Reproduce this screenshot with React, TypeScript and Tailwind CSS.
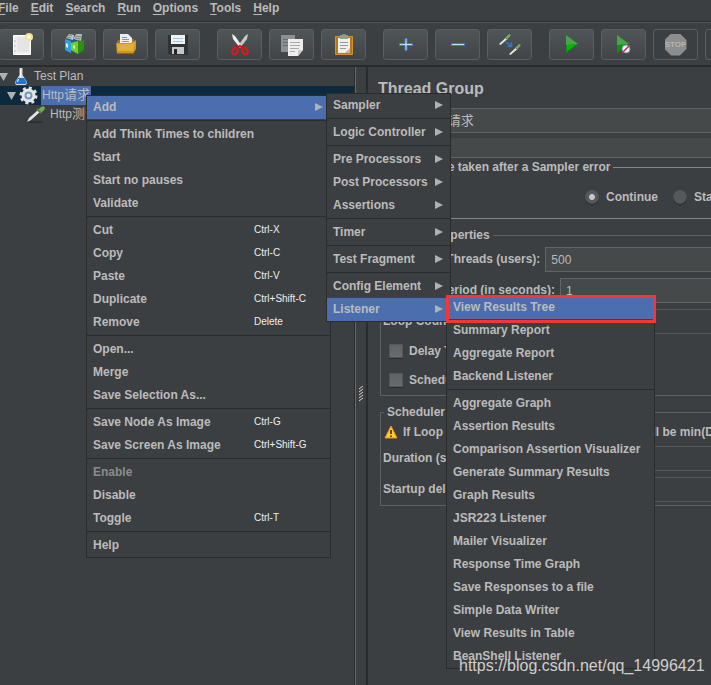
import React from "react";

type Item = { label: string; keys?: string; arrow?: boolean; active?: boolean; disabled?: boolean };
type Group = Item[];

const contextMenu: Group[] = [
  [{ label: "Add", arrow: true, active: true }],
  [
    { label: "Add Think Times to children" },
    { label: "Start" },
    { label: "Start no pauses" },
    { label: "Validate" },
  ],
  [
    { label: "Cut", keys: "Ctrl-X" },
    { label: "Copy", keys: "Ctrl-C" },
    { label: "Paste", keys: "Ctrl-V" },
    { label: "Duplicate", keys: "Ctrl+Shift-C" },
    { label: "Remove", keys: "Delete" },
  ],
  [{ label: "Open..." }, { label: "Merge" }, { label: "Save Selection As..." }],
  [
    { label: "Save Node As Image", keys: "Ctrl-G" },
    { label: "Save Screen As Image", keys: "Ctrl+Shift-G" },
  ],
  [{ label: "Enable", disabled: true }, { label: "Disable" }, { label: "Toggle", keys: "Ctrl-T" }],
  [{ label: "Help" }],
];

const addMenu: Group[] = [
  [{ label: "Sampler", arrow: true }],
  [{ label: "Logic Controller", arrow: true }],
  [
    { label: "Pre Processors", arrow: true },
    { label: "Post Processors", arrow: true },
    { label: "Assertions", arrow: true },
  ],
  [{ label: "Timer", arrow: true }],
  [{ label: "Test Fragment", arrow: true }],
  [
    { label: "Config Element", arrow: true },
    { label: "Listener", arrow: true, active: true },
  ],
];

const listenerMenu: Group[] = [
  [
    { label: "View Results Tree", active: true },
    { label: "Summary Report" },
    { label: "Aggregate Report" },
    { label: "Backend Listener" },
  ],
  [
    { label: "Aggregate Graph" },
    { label: "Assertion Results" },
    { label: "Comparison Assertion Visualizer" },
    { label: "Generate Summary Results" },
    { label: "Graph Results" },
    { label: "JSR223 Listener" },
    { label: "Mailer Visualizer" },
    { label: "Response Time Graph" },
    { label: "Save Responses to a file" },
    { label: "Simple Data Writer" },
    { label: "View Results in Table" },
    { label: "BeanShell Listener" },
  ],
];

function Menu({ groups, className }: { groups: Group[]; className: string }) {
  return (
    <div role="menu" className={"absolute border border-[#2b2b2b] bg-[#3c3f41] " + className}>
      {groups.map((group, i) => (
        <div key={i} className={i > 0 ? "mt-px border-t border-[#2b2b2b] pt-0.5" : ""}>
          {group.map((item) => (
            <button
              key={item.label}
              type="button"
              role="menuitem"
              disabled={item.disabled}
              className={
                "flex h-[23px] w-full items-center whitespace-nowrap pb-0.5 pl-1.5 text-left font-bold " +
                (item.active ? "bg-[#4b6eaf]" : "") +
                (item.disabled ? " text-[#8c8c8c]" : "")
              }
            >
              <span className="flex-1">{item.label}</span>
              {item.keys && <span className="w-[76px] text-[10px] font-normal text-[#eeeeee]">{item.keys}</span>}
              {item.arrow && (
                <svg className="mr-[7px] h-2 w-2 shrink-0" viewBox="0 0 8 8" aria-hidden="true">
                  <path d="M0 0 L8 4 L0 8 Z" fill="#afb1b3" />
                </svg>
              )}
            </button>
          ))}
        </div>
      ))}
    </div>
  );
}

function Pipette({ x = 0, y = 0 }: { x?: number; y?: number }) {
  return (
    <g transform={`translate(${x} ${y})`}>
      <path d="M0 10 L7 3.500 L8.500 5 L1.500 11 Z" fill="#e4e6e2" />
      <path d="M6 4 L10 0 Q12 0 11.500 2 L8 5.500 Z" fill="#7aa862" />
      <path d="M6 3 L9 6" stroke="#4c8a35" />
    </g>
  );
}

const icons: Record<string, React.ReactNode> = {
  New: (
    <>
      <path d="M3.500 5.500 H20.500 V24.500 H3.500 Z" fill="#f0f0f0" stroke="#fff" />
      <path d="M4.500 11h1m-1 5h1m-1 5h1" stroke="#888" />
      <path d="M7 7 H19 V22 H7 Z" fill="#e5e5e5" />
      <circle cx="19" cy="7" r="4" fill="#eee38a" />
      <circle cx="19" cy="7" r="2" fill="#fffbd2" />
    </>
  ),
  Templates: (
    <>
      <path d="M4 8 L7 4 L12 5 L11 10 Z" fill="#c3c9cc" />
      <path d="M11 9 L14 4 L20 4 L19 11 Z" fill="#b2babe" />
      <path d="M6 5 L10 6 M13 6 L19 7 M5 7 L9 8 M13 8 L18 9" stroke="#7d868b" />
      <path d="M3 9 L9 11 V23 L3 20 Z" fill="#2ea1dc" />
      <path d="M9 11 L13 9 V20 L9 23 Z" fill="#0967a5" />
      <path d="M4 13 L6 14 V18 L4 17 Z" fill="#d6edf7" />
      <path d="M9 13 L16 11 V24 L9 20 Z" fill="#6fd02b" />
      <path d="M16 12 L22 10 V20 L16 24 Z" fill="#2c920e" />
      <path d="M11 15 L13 16 V19 L11 18 Z" fill="#d5f4bb" />
    </>
  ),
  Open: (
    <>
      <path d="M3 11 L7 9 H20 V18 H3 Z" fill="#a87414" />
      <path d="M6 4 H14 L18 8 V16 H6 Z" fill="#eceeee" />
      <path d="M8 7.500h5m-5 2h7m-7 2h7" stroke="#8f9598" />
      <path d="M2 13 H17 L22 10 V19 L19 24 H3 Z" fill="#d09420" />
      <path d="M3 14 H18 L21 12 L19 21 H4 Z" fill="#e1af3e" />
      <path d="M3 23.500 H19" stroke="#9a6500" />
    </>
  ),
  Save: (
    <>
      <path d="M2 5 H22 V25 H4 L2 23 Z" fill="#323232" />
      <path d="M5 5 H19 V14 H5 Z" fill="#edf3f7" />
      <path d="M7 8.500h10m-10 3h10" stroke="#a6c6dc" />
      <path d="M6 17 H18 V24 H6 Z" fill="#c7c7c7" />
      <path d="M8 19 H11 V24 H8 Z" fill="#252525" />
    </>
  ),
  Cut: (
    <>
      <path d="M4 4 L7 6 L14 16 L12 18 L5 9 Z" fill="#ededeb" />
      <path d="M20 4 L17 6 L10 16 L12 18 L19 9 Z" fill="#c9cac8" />
      <ellipse cx="7" cy="21" rx="2.500" ry="3.500" fill="none" stroke="#e11919" strokeWidth="2" transform="rotate(25 7 21)" />
      <ellipse cx="17" cy="21" rx="2.500" ry="3.500" fill="none" stroke="#e11919" strokeWidth="2" transform="rotate(-25 17 21)" />
      <path d="M8 18 L12 16 L16 18" fill="none" stroke="#d20f0f" strokeWidth="2" />
    </>
  ),
  Copy: (
    <>
      <path d="M1 5 H15 V22 H1 Z" fill="#8c9092" />
      <path d="M3 9.500h9m-9 3h8m-8 3h7" stroke="#686c6e" />
      <path d="M8 9 H23 V20 L18 26 H8 Z" fill="#edeeed" />
      <path d="M10 12.500h10m-10 3h10m-10 3h9m-9 3h5" stroke="#aaa" />
      <path d="M23 20 H18 V26 Z" fill="#c9caca" />
    </>
  ),
  Paste: (
    <>
      <path d="M3.500 6.500 H20.500 V24.500 H3.500 Z" fill="#b97614" stroke="#d4922c" />
      <path d="M6 8 H18 V23 H6 Z" fill="#efefec" />
      <path d="M8 5 H10 Q12 3 14 5 H16 V9 H8 Z" fill="#969b91" />
      <path d="M8 12.500h8m-8 3h8m-8 3h6" stroke="#999" />
      <path d="M18 18 L13 23 H18 Z" fill="#b9b9b9" />
    </>
  ),
  Expand: <path d="M11 8.500 h2 v5 h5.500 v2 h-5.500 v5 h-2 v-5 h-5.500 v-2 h5.500 Z" fill="#bfdcf9" stroke="#397bd5" />,
  Collapse: <path d="M5.500 13.500 H18.500 V15.500 H5.500 Z" fill="#bfdcf9" stroke="#397bd5" />,
  Toggle: (
    <>
      <Pipette x={1} y={4} />
      <Pipette x={11} y={14} />
      <path d="M8 12 L13 16 M13.500 12 V16.500 H9.500" stroke="#247bd6" strokeWidth="1.500" fill="none" />
    </>
  ),
  Start: (
    <>
      <path d="M6 5 L18 14 L6 23 Z" fill="#07930b" />
      <path d="M6 5 L18 14 L6 15 Z" fill="#4da34d" />
      <path d="M7 15 L17 14 L7 21 Z" fill="#05b508" />
    </>
  ),
  "Start no pauses": (
    <>
      <path d="M5 5 L17 14 L5 23 Z" fill="#07930b" />
      <path d="M5 5 L17 14 L5 15 Z" fill="#4da34d" />
      <circle cx="14" cy="19" r="4" fill="#e8f1f6" stroke="#719cc3" />
      <path d="M10 23 L18 15" stroke="#d0203a" strokeWidth="1.500" />
    </>
  ),
};

function ToolButton({ name }: { name: string }) {
  return (
    <button
      type="button"
      aria-label={name}
      className="flex h-[31px] w-[45px] shrink-0 items-center justify-center rounded-[3px] border border-[#5b5e60] bg-linear-to-b from-[#505557] to-[#414547]"
    >
      <svg className="-mt-px h-7 w-6" viewBox="0 0 24 28" fill="none" aria-hidden="true">
        {icons[name]}
      </svg>
    </button>
  );
}

const toolGroups = [
  ["New", "Templates", "Open", "Save"],
  ["Cut", "Copy", "Paste"],
  ["Expand", "Collapse", "Toggle"],
];

function Toolbar() {
  return (
    <div className="-ml-px flex h-[43px] shrink-0 gap-[17px] border-t border-[#55595b] pt-[6px]">
      {toolGroups.map((g) => (
        <div key={g[0]} className="flex shrink-0 gap-[7px]">
          {g.map((n) => (
            <ToolButton key={n} name={n} />
          ))}
        </div>
      ))}
      <div className="flex shrink-0 gap-[7px]">
        <ToolButton name="Start" />
        <ToolButton name="Start no pauses" />
        <button
          type="button"
          disabled
          aria-label="Stop"
          className="flex h-[31px] w-[45px] shrink-0 items-center justify-center rounded-[3px] border border-[#5b5e60]"
        >
          <span className="flex h-[22px] w-[22px] items-center justify-center bg-[#8d8d8d] text-[8px] font-bold text-[#b4b4b4] [clip-path:polygon(30%_0,70%_0,100%_30%,100%_70%,70%_100%,30%_100%,0_70%,0_30%)]">
            STOP
          </span>
        </button>
        <button
          type="button"
          disabled
          aria-label="Shutdown"
          className="h-[31px] w-[45px] shrink-0 rounded-[3px] border border-[#5b5e60]"
        />
      </div>
    </div>
  );
}

function Expander() {
  return (
    <svg className="h-[9px] w-[9px] shrink-0" viewBox="0 0 9 9" aria-hidden="true">
      <path d="M0 1 H9 L4.500 9 Z" fill="#afb1b3" />
    </svg>
  );
}

function TreePane() {
  return (
    <div className="w-[356px] shrink-0 border-r border-[#666a6c] shadow-[inset_-1px_0_#2b2b2b]" role="tree">
      <div className="flex h-[19px] items-center pb-px" role="treeitem">
        <span className="-ml-px flex">
          <Expander />
        </span>
        <svg className="ml-[7px] h-[18px] w-3 shrink-0" viewBox="0 0 12 18" aria-hidden="true">
          <path d="M4.500 1 H7.500 V8 L12 15 Q12 18 10 18 H2 Q0 18 0 15 L4.500 8 Z" fill="#cfdce5" />
          <path d="M3 11 H9 L11.500 15 Q12 17 10 17 H2 Q0 17 0.500 15 Z" fill="#2277cc" />
          <path d="M5.500 2 V10 M3.500 12 L2.500 15" stroke="#fff" />
        </svg>
        <span className="ml-[7px]">Test Plan</span>
      </div>
      <div className="mr-px flex h-[19px] items-center bg-[#0d293e]" role="treeitem">
        <span className="ml-[7px] flex">
          <Expander />
        </span>
        <svg className="ml-[3px] h-[19px] w-[19px] shrink-0" viewBox="0 0 19 19" aria-hidden="true">
          <circle cx="9.500" cy="9.500" r="7.500" fill="none" stroke="#dedede" strokeWidth="3" strokeDasharray="3 2.890" />
          <circle cx="9.500" cy="9.500" r="5.500" fill="#7796bb" stroke="#e6e6e6" strokeWidth="3" />
          <circle cx="9.500" cy="9.500" r="2" fill="#dceaf5" />
        </svg>
        <span className="ml-[3px] flex h-[19px] items-center whitespace-nowrap bg-[#4b6eaf] px-px pb-px">
          Http<span className="text-[13px]">请求</span>
        </span>
      </div>
      <div className="flex h-[19px] items-center pb-px" role="treeitem">
        <svg className="ml-[26px] h-[19px] w-5 shrink-0" viewBox="0 0 20 19" aria-hidden="true">
          <ellipse cx="9" cy="17" rx="8" ry="1" fill="#2c2e2f" />
          <path d="M1 17 L3 13 L12 5 L14 7 L5 15 Z" fill="#e1e3df" />
          <path d="M12 5 L15 2 Q19 0 19 4 L15 8 Z" fill="#73a95c" />
          <path d="M11 4 L15 8" stroke="#4c8a35" strokeWidth="2" />
        </svg>
        <span className="ml-1 whitespace-nowrap">
          Http<span className="text-[13px]">测试</span>
        </span>
      </div>
    </div>
  );
}

const fieldClass =
  "min-w-0 flex-1 border border-[#646464] bg-[#45494a] px-[5px] outline-none disabled:border-[#55585a] disabled:bg-[#3c3f41]";

function Field({ id, label, value, disabled }: { id: string; label: string; value?: string; disabled?: boolean }) {
  return (
    <div className="flex h-[25px] items-stretch gap-[5px]">
      <label htmlFor={id} className="self-center whitespace-nowrap pb-px font-bold">
        {label}
      </label>
      <input id={id} defaultValue={value} disabled={disabled} className={fieldClass} />
    </div>
  );
}

function Check({ label }: { label: string }) {
  return (
    <label className="flex h-[29px] items-center gap-[6px] pl-[6px] font-bold">
      <input
        type="checkbox"
        className="h-[14px] w-[14px] shrink-0 appearance-none border border-[#555] bg-linear-to-b from-[#606263] to-[#696b6c] shadow-[0_1px_#292b2c]"
      />
      <span className="whitespace-nowrap">{label}</span>
    </label>
  );
}

function Radio({ label, checked }: { label: string; checked?: boolean }) {
  return (
    <label className="flex items-center gap-[7px] font-bold">
      <input
        type="radio"
        name="onError"
        defaultChecked={checked}
        className="h-[14px] w-[14px] shrink-0 appearance-none rounded-full border border-[#505456] bg-[#56595b] shadow-[0_1px_#292b2c] checked:bg-radial checked:from-[#c5c5c5] checked:from-30% checked:to-[#56595b] checked:to-40%"
      />
      <span className="whitespace-nowrap">{label}</span>
    </label>
  );
}

function Legend({ children }: { children: React.ReactNode }) {
  return <legend className="ml-px whitespace-nowrap px-[3px] font-bold leading-4">{children}</legend>;
}

function ThreadGroupPane() {
  return (
    <div className="flex min-w-0 flex-1 flex-col border-l-2 border-[#2b2b2b]">
      <h1 className="mt-3 ml-[10px] text-[16px] leading-5 font-bold">Thread Group</h1>
      <div className="mt-[9px] ml-[10px] flex h-[25px] border-t border-b border-[#646464]">
        <label htmlFor="name" className="w-[46px] self-center font-bold">
          Name:
        </label>
        <input
          id="name"
          defaultValue="Http请求"
          className="min-w-0 flex-1 bg-[#45494a] text-[13px] outline-none"
        />
      </div>
      <div className="mt-[5px] ml-[10px] flex h-5 border-b border-[#646464]">
        <label htmlFor="comments" className="w-16 self-center font-bold">
          Comments:
        </label>
        <input id="comments" className="min-w-0 flex-1 bg-[#45494a] outline-none" />
      </div>
      <fieldset className="mt-px -mr-4 ml-3 h-[60px] min-w-0 border border-[#85888a]">
        <Legend>Action to be taken after a Sampler error</Legend>
        <div className="flex justify-start gap-[15px] pt-[14px] pl-[204px]">
          <Radio label="Continue" checked />
          <Radio label="Start Next Thread Loop" />
        </div>
      </fieldset>
      <fieldset className="mt-2 -mr-4 ml-3 h-[169px] min-w-0 border border-[#5e6264] px-0.5">
        <Legend>Thread Properties</Legend>
        <div className="flex flex-col gap-[6px] pt-1">
          <Field id="threads" label="Number of Threads (users):" value="500" />
          <Field id="ramp" label="Ramp-Up Period (in seconds):" value="1" />
          <Field id="loops" label="Loop Count:" disabled />
        </div>
        <div className="pt-0.5">
          <Check label="Delay Thread creation until needed" />
          <Check label="Scheduler" />
        </div>
      </fieldset>
      <fieldset className="mt-2 -mr-4 ml-3 min-w-0 border border-[#5e6264] px-0.5 pb-[3px]">
        <Legend>Scheduler Configuration</Legend>
        <div className="flex h-[26px] items-center gap-[5px] whitespace-nowrap pb-0.5 pl-px font-bold">
          <svg className="h-[14px] w-[14px] shrink-0" viewBox="0 0 14 14" aria-hidden="true">
            <path d="M7 1 L13 13 H1 Z" fill="#f8d526" stroke="#ef8a2b" strokeLinejoin="round" />
            <path d="M7 5 V9 M7 10.500 V12" stroke="#7b3b00" strokeWidth="2" />
          </svg>
          <span>If Loop Count isn't -1 or Forever duration will be min(Duration, Loop Count * iteration duration)</span>
        </div>
        <div className="flex flex-col gap-[6px]">
          <Field id="duration" label="Duration (seconds)" disabled />
          <Field id="delay" label="Startup delay (seconds)" disabled />
        </div>
      </fieldset>
    </div>
  );
}

export default function App() {
  return (
    <div className="relative flex h-screen flex-col overflow-hidden bg-[#3c3f41] font-['Liberation_Sans','Noto_Sans_CJK_SC',sans-serif] text-[12px] leading-4 text-[#bbbbbb]">
      <nav className="-ml-0.5 flex h-[22px] shrink-0 items-start gap-3 border-b border-[#2b2b2b] font-bold">
        {["File", "Edit", "Search", "Run", "Options", "Tools", "Help"].map((m) => (
          <button key={m} type="button">
            <span className="underline underline-offset-2">{m[0]}</span>
            {m.slice(1)}
          </button>
        ))}
      </nav>
      <Toolbar />
      <main className="flex min-h-0 flex-1 border-t-2 border-[#2b2b2b]">
        <TreePane />
        <div className="flex w-[10px] shrink-0 items-center justify-center pt-9">
          <svg className="h-4 w-1" viewBox="0 0 4 16" aria-hidden="true">
            <path d="M0 3 L4 0 M0 6 L4 3 M0 9 L4 6 M0 12 L4 9 M0 15 L4 12" stroke="#d8d8d8" />
          </svg>
        </div>
        <ThreadGroupPane />
      </main>
      <Menu groups={contextMenu} className="top-[95px] left-[86px] w-[245px]" />
      <Menu groups={addMenu} className="top-[93px] left-[326px] w-[125px]" />
      <Menu groups={listenerMenu} className="top-[295px] left-[446px] w-[209px]" />
      <div className="pointer-events-none absolute top-[295px] left-[446px] h-7 w-[210px] border-[3px] border-[#fb3431]" />
      <div className="absolute top-[656px] left-[459px] text-[16px] leading-5 text-[#cfcfcf]">
        https://blog.csdn.net/qq_14996421
      </div>
    </div>
  );
}
